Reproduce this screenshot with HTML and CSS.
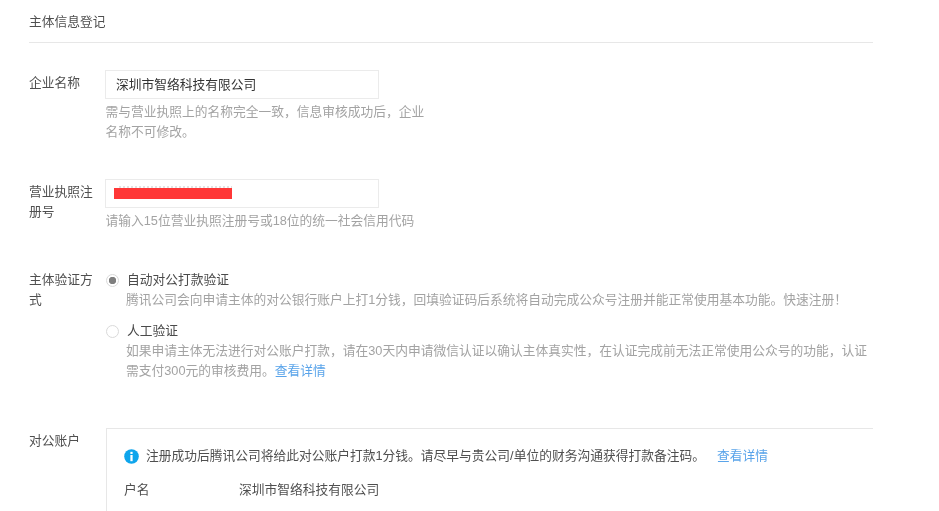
FILE: index.html
```html
<!DOCTYPE html>
<html lang="zh-CN">
<head>
<meta charset="utf-8">
<title>主体信息登记</title>
<link rel="stylesheet" href="styles.css">
</head>
<body>
<main class="page">
  <h2 class="title">主体信息登记</h2>

  <section class="row row-name">
    <div class="label">企业名称</div>
    <div class="field">
      <div class="input">深圳市智络科技有限公司</div>
      <p class="hint hint-narrow">需与营业执照上的名称完全一致，信息审核成功后，企业名称不可修改。</p>
    </div>
  </section>

  <section class="row row-license">
    <div class="label">营业执照注册号</div>
    <div class="field">
      <div class="input"><span class="redact"></span></div>
      <p class="hint">请输入15位营业执照注册号或18位的统一社会信用代码</p>
    </div>
  </section>

  <section class="row row-verify">
    <div class="label">主体验证方式</div>
    <div class="field">
      <div class="option">
        <span class="radio radio-on"></span>
        <div class="option-body">
          <div class="option-name">自动对公打款验证</div>
          <p class="hint">腾讯公司会向申请主体的对公银行账户上打1分钱，回填验证码后系统将自动完成公众号注册并能正常使用基本功能。快速注册！</p>
        </div>
      </div>
      <div class="option option-second">
        <span class="radio"></span>
        <div class="option-body">
          <div class="option-name">人工验证</div>
          <p class="hint">如果申请主体无法进行对公账户打款，请在30天内申请微信认证以确认主体真实性，在认证完成前无法正常使用公众号的功能，认证需支付300元的审核费用。<a class="link" href="#">查看详情</a></p>
        </div>
      </div>
    </div>
  </section>

  <section class="row row-account">
    <div class="label">对公账户</div>
    <div class="box">
      <div class="notice">
        <svg class="info" viewBox="0 0 16 16" aria-hidden="true">
          <circle cx="8" cy="8" r="7.8" fill="#0ea5ec"/>
          <rect x="6.8" y="3" width="2.4" height="2.3" fill="#fff"/>
          <rect x="6.8" y="6.4" width="2.4" height="6.6" fill="#fff"/>
        </svg>
        <span class="notice-text">注册成功后腾讯公司将给此对公账户打款1分钱。请尽早与贵公司/单位的财务沟通获得打款备注码。</span>
        <a class="link notice-link" href="#">查看详情</a>
      </div>
      <div class="pair">
        <span class="pair-key">户名</span>
        <span class="pair-value">深圳市智络科技有限公司</span>
      </div>
    </div>
  </section>
</main>
</body>
</html>
```

FILE: styles.css
```css
* {
  box-sizing: border-box;
}

html,
body {
  margin: 0;
  height: 511px;
  overflow: hidden;
  background: #fff;
}

body {
  font-family: "Liberation Sans", "Noto Sans CJK SC", sans-serif;
  font-size: 12.75px;
  line-height: 20px;
  color: #4f4f4f;
}

.page {
  width: 844px;
  margin-left: 29px;
  filter: blur(0.45px);
}

.title {
  margin: 0;
  padding: 12px 0 10px;
  font-size: 12.75px;
  font-weight: 400;
  line-height: 20px;
  border-bottom: 1px solid #e7e7e7;
}

.row {
  display: flex;
}

.row-name {
  margin-top: 27px;
}

.row-license {
  margin-top: 37px;
}

.row-verify {
  margin-top: 39px;
}

.row-account {
  margin-top: 47px;
}

.label {
  flex: none;
  width: 76px;
  padding-right: 11px;
  padding-top: 3px;
}

.row-verify .label {
  padding-top: 0;
}

.field {
  flex: 1;
  min-width: 0;
}

.input {
  display: flex;
  align-items: center;
  width: 274px;
  height: 29px;
  padding-left: 10px;
  border: 1px solid #ebebeb;
  color: #333;
}

.redact {
  display: block;
  width: 118px;
  height: 13px;
  margin: 0 0 2px -2px;
  background:
    linear-gradient(#ff3737, #ff3737) bottom / 100% 11px no-repeat,
    repeating-linear-gradient(90deg, #e2e2e2 0 2px, transparent 2px 4px) 5px 0 / 100% 2px no-repeat;
}

.hint {
  margin: 3px 0 0 0.5px;
  color: #a3a3a3;
}

.hint-narrow {
  width: 322px;
}

.option {
  display: flex;
  margin-left: 1px;
}

.option-second {
  margin-top: 11px;
}

.radio {
  flex: none;
  width: 13px;
  height: 13px;
  margin: 4px 8px 0 0;
  border: 1px solid #d9d9d9;
  border-radius: 50%;
  background: #fff;
}

.radio-on {
  background: radial-gradient(circle, #7f7f7f 0 3.4px, #fff 4px);
}

.option-body {
  flex: 1;
  min-width: 0;
}

.option-name {
  color: #4a4a4a;
}

.option-body .hint {
  margin: 0 0 0 -1px;
  width: 745px;
}

.link {
  color: #5aa4ea;
  text-decoration: none;
}

.box {
  flex: 1;
  min-width: 0;
  height: 90px;
  margin-left: 1px;
  padding: 17px 17px 0;
  border-top: 1px solid #e7e7e7;
  border-left: 1px solid #e7e7e7;
}

.notice {
  display: flex;
  align-items: center;
}

.info {
  flex: none;
  width: 15px;
  height: 15px;
  margin-right: 7px;
}

.notice-link {
  margin-left: 12px;
}

.pair {
  display: flex;
  margin-top: 14px;
}

.pair-key {
  flex: none;
  width: 115px;
}
```
